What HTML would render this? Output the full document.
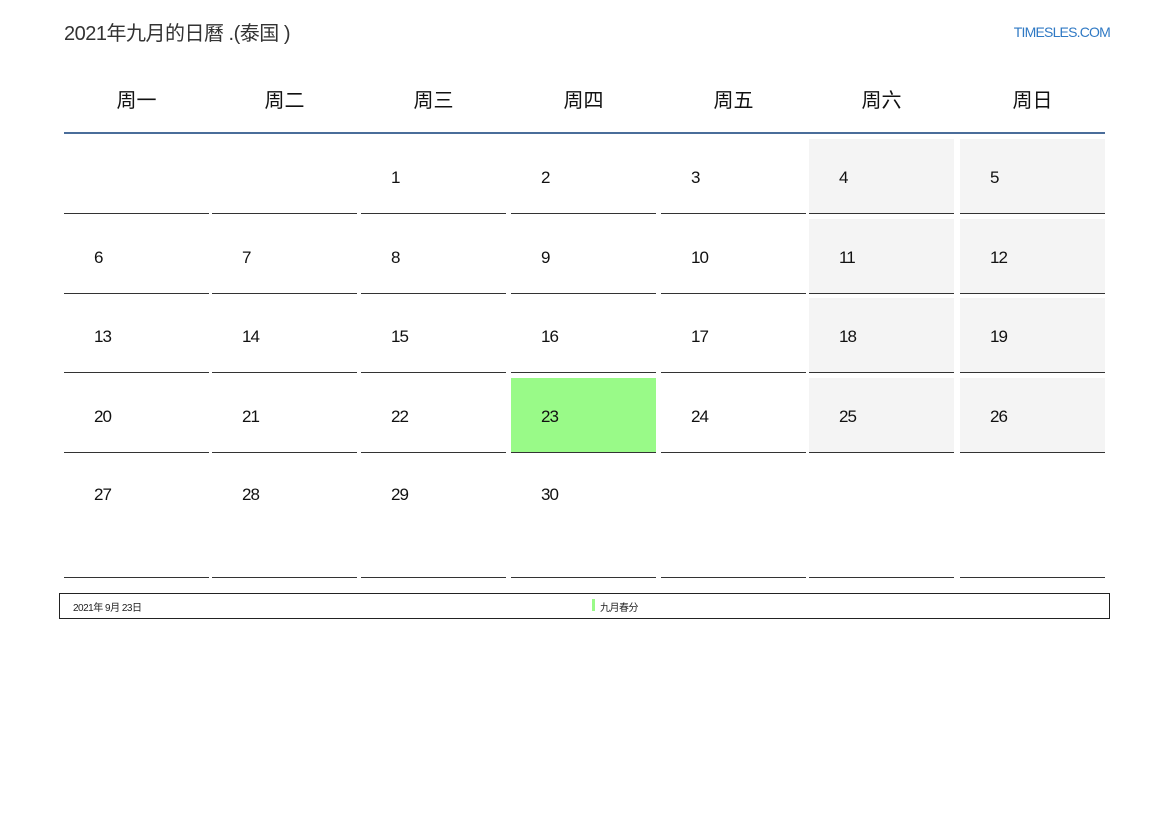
<!DOCTYPE html><html><head><meta charset="utf-8"><style>
body{margin:0;width:1169px;height:827px;background:#fff;font-family:"Liberation Sans","Noto Sans CJK SC",sans-serif;position:relative;color:#222}
.a{position:absolute}
.t{left:64px;top:17px;font-size:20px;color:#333;letter-spacing:-0.5px}
.l{right:59px;top:24px;font-size:14px;color:#2f79c4;letter-spacing:-0.8px}
.h{top:84px;font-size:20px;width:145px;text-align:center;color:#111}
.hl{left:64px;top:132px;width:1041px;height:2px;background:#4a6d9a}
.c{border-bottom:1px solid #333;box-sizing:border-box;width:145px}
.n{position:absolute;left:30px;font-size:17px;color:#111;letter-spacing:-1px}
.w{background:#f4f4f4}
.g{background:#99fa88}
.f{left:59px;top:593px;width:1049px;height:24px;border:1px solid #222;font-size:10px;letter-spacing:-0.5px}
</style></head><body>
<div class="a t">2021年九月的日曆 .(泰国 )</div>
<div class="a l">TIMESLES.COM</div>
<div class="a hl"></div>
<div id="g"></div>
<div class="a f"><span class="a" style="left:13px;top:5px">2021年 9月 23日</span><span class="a" style="left:532px;top:5px;width:3px;height:12px;background:#99fa88"></span><span class="a" style="left:540px;top:5px">九月春分</span></div>
<script>
var xs=[64,212,361,511,661,809,960],hs=["周一","周二","周三","周四","周五","周六","周日"];
var rt=[139,219,298,378,457],rb=[214,294,373,453,578];
var o="";
for(var i=0;i<7;i++)o+='<div class="a h" style="left:'+xs[i]+'px">'+hs[i]+'</div>';
for(var r=0;r<5;r++)for(var c=0;c<7;c++){var d=r*7+c-1;var cls="a c";if(c>=5&&d<=26)cls+=" w";if(d==23)cls+=" g";
var nt=(r==4?28:29);
o+='<div class="'+cls+'" style="left:'+xs[c]+'px;top:'+rt[r]+'px;height:'+(rb[r]-rt[r])+'px">'+((d>=1&&d<=30)?'<span class="n" style="top:'+nt+'px">'+d+'</span>':'')+'</div>';}
document.getElementById("g").innerHTML=o;
</script>
</body></html>
